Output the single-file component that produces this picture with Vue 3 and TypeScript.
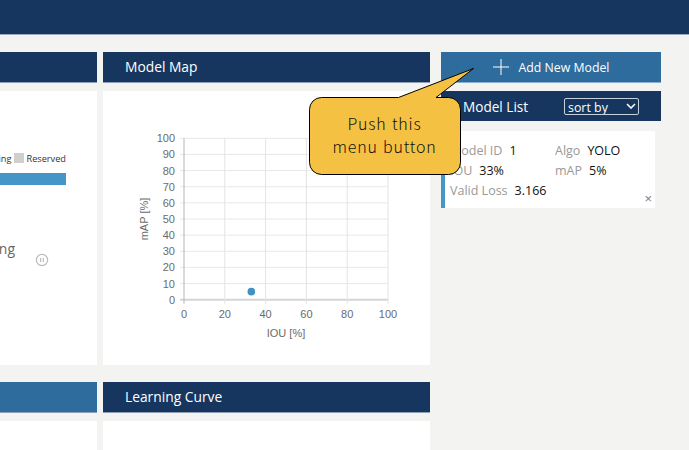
<template>
  <div class="page">
    <header class="topbar" />

    <main class="board">
      <div class="charts">
        <section class="panel panel--first">
          <h2 class="panel-head" />
          <div class="panel-body status">
            <div class="legend">
              <span class="legend-label">Training</span>
              <i class="swatch" />
              <span class="legend-label">Reserved</span>
            </div>
            <div class="usage-bar" />
            <div class="job-row">
              <span class="job-name">Training</span>
              <svg class="pause" viewBox="0 0 14 14" width="14" height="14">
                <circle cx="7" cy="7" r="5.6" fill="none" stroke="#bdbdbd" stroke-width="1.2" />
                <path d="M5.6 4.9v4.2M8.4 4.9v4.2" stroke="#bdbdbd" stroke-width="1.2" />
              </svg>
            </div>
          </div>
        </section>

        <section class="panel">
          <h2 class="panel-head">Model Map</h2>
          <div class="panel-body">
            <svg class="map" viewBox="0 0 327 274" width="327" height="274">
              <g v-for="t in ticks" :key="'h' + t">
                <line :x1="plot.left - 4" :x2="plot.right" :y1="yOf(t)" :y2="yOf(t)" :stroke="t === 0 ? '#d4d4d4' : '#e8e8e8'" :stroke-width="t === 0 ? 2 : 1" />
                <text class="tick" :x="plot.left - 9" :y="yOf(t) + 4" text-anchor="end">{{ t }}</text>
              </g>
              <g v-for="t in xTicks" :key="'v' + t">
                <line :x1="xOf(t)" :x2="xOf(t)" :y1="plot.top" :y2="plot.bottom + 4" :stroke="t === 0 ? '#b5b5b5' : '#e4e4e4'" />
                <text class="tick" :x="xOf(t)" :y="plot.bottom + 18" text-anchor="middle">{{ t }}</text>
              </g>
              <text class="tick" :x="183" :y="246" text-anchor="middle">IOU [%]</text>
              <text class="tick" text-anchor="middle" transform="translate(45 128) rotate(-90)">mAP [%]</text>
              <circle :cx="xOf(33)" :cy="yOf(5)" r="3.8" fill="#3f92c5" />
            </svg>
          </div>
        </section>

        <section class="panel panel--first panel--low">
          <h2 class="panel-head panel-head--light" />
          <div class="panel-body" />
        </section>

        <section class="panel panel--low">
          <h2 class="panel-head">Learning Curve</h2>
          <div class="panel-body" />
        </section>
      </div>

      <aside class="side">
        <button class="add-btn" type="button">
          <svg viewBox="0 0 16 16" width="16" height="16">
            <path d="M8 0v16M0 8h16" stroke="#fff" stroke-width="1" fill="none" />
          </svg>
          <span>Add New Model</span>
        </button>

        <div class="list-head">
          <span class="list-title">Model List</span>
          <label class="sort">
            <select>
              <option>sort by</option>
            </select>
            <svg viewBox="0 0 10 6" width="10" height="6">
              <path d="M1 1l4 4 4-4" stroke="#fff" stroke-width="1.6" fill="none" />
            </svg>
          </label>
        </div>

        <article v-for="m in models" :key="m.id" class="card">
          <div><span class="key">Model ID</span>{{ m.id }}</div>
          <div><span class="key">Algo</span>{{ m.algo }}</div>
          <div><span class="key">IOU</span>{{ m.iou }}%</div>
          <div><span class="key">mAP</span>{{ m.map }}%</div>
          <div class="wide"><span class="key">Valid Loss</span>{{ m.loss }}</div>
          <span class="close">×</span>
        </article>
      </aside>
    </main>

    <div class="callout">
      <svg viewBox="0 0 170 112" width="170" height="112">
        <path
          d="M12.5 29.5H89.5L164.5 0.5L127 29.5H139.5a12 12 0 0 1 12 12V94.5a12 12 0 0 1-12 12H12.5a12 12 0 0 1-12-12V41.5a12 12 0 0 1 12-12Z"
          fill="#f5c142"
          stroke="#000"
          stroke-width="1"
        />
      </svg>
      <p class="callout-text">Push this<br />menu button</p>
    </div>
  </div>
</template>

<script setup lang="ts">
  const plot = { left: 81, right: 285, top: 47.3, bottom: 208.7 }

  const ticks = [0, 10, 20, 30, 40, 50, 60, 70, 80, 90, 100]
  const xTicks = [0, 20, 40, 60, 80, 100]

  const models = [{ id: 1, algo: "YOLO", iou: 33, map: 5, loss: 3.166 }]

  function xOf(v: number) {
    return plot.left + ((plot.right - plot.left) * v) / 100
  }

  function yOf(v: number) {
    return plot.bottom - ((plot.bottom - plot.top) * v) / 100
  }
</script>

<style scoped>
  .page {
    position: relative;
    width: 689px;
    height: 450px;
    overflow: hidden;
    background: #f3f3f1;
    font-family: "Open Sans", "Liberation Sans", sans-serif;
  }

  .topbar {
    height: 35px;
    background: #16365f;
    border-bottom: 1px solid #9aa9bd;
    box-sizing: border-box;
  }

  .board {
    display: flex;
    padding-top: 17px;
  }

  .charts {
    display: grid;
    grid-template-columns: 97px 327px;
    grid-template-rows: 313px 1fr;
    column-gap: 6px;
    row-gap: 17px;
    width: 430px;
  }

  .panel {
    min-width: 0;
    overflow: hidden;
  }

  .panel-head {
    box-sizing: border-box;
    height: 31px;
    margin: 0 0 8px;
    padding-left: 22px;
    background: #16365f;
    border-bottom: 1px solid #8fa0b6;
    color: #fff;
    font-size: 13.8px;
    font-weight: 400;
    line-height: 30px;
  }

  .panel-head--light {
    background: #2e6c9e;
  }

  .panel-body {
    height: 274px;
    background: #fff;
  }

  .panel--low .panel-body {
    height: 30px;
  }

  .status {
    display: flex;
    flex-direction: column;
    align-items: flex-end;
    padding: 61px 31px 0 0;
    box-sizing: border-box;
    color: #333;
  }

  .legend {
    display: flex;
    align-items: center;
    height: 12px;
    white-space: nowrap;
  }

  .legend-label {
    font-size: 9.2px;
  }

  .swatch {
    width: 10px;
    height: 10px;
    margin: 0 3px 0 2px;
    background: #cfcfcf;
  }

  .usage-bar {
    flex: none;
    width: 220px;
    height: 12px;
    margin-top: 9px;
    background: #4596c8;
  }

  .job-row {
    display: flex;
    align-items: flex-start;
    margin-top: 54px;
    margin-right: 17px;
    white-space: nowrap;
    color: #666;
    font-size: 14px;
    line-height: 19px;
  }

  .pause {
    margin: 14px 0 0 20px;
  }

  .map {
    display: block;
  }

  .tick {
    fill: #6b6b6b;
    font-family: "Liberation Sans", Arial, sans-serif;
    font-size: 11px;
  }

  .side {
    display: flex;
    flex-direction: column;
    width: 220px;
    margin-left: 11px;
  }

  .add-btn {
    box-sizing: border-box;
    display: flex;
    align-items: center;
    justify-content: center;
    gap: 10px;
    height: 31px;
    padding: 0;
    border: 0;
    border-bottom: 1px solid #8fb0cc;
    background: #2e6c9e;
    color: #fff;
    font-family: inherit;
    font-size: 12.3px;
  }

  .list-head {
    box-sizing: border-box;
    display: flex;
    align-items: center;
    height: 30px;
    margin-top: 8px;
    padding-left: 22px;
    background: #16365f;
    color: #fff;
  }

  .list-title {
    width: 101px;
    font-size: 13.6px;
  }

  .sort {
    position: relative;
    display: block;
    width: 75px;
    height: 17px;
  }

  .sort select {
    appearance: none;
    box-sizing: border-box;
    display: block;
    width: 100%;
    height: 100%;
    padding: 2px 0 0 3px;
    border: 1px solid #c8d0dc;
    border-radius: 2px;
    background: transparent;
    color: #fff;
    font-family: inherit;
    font-size: 12.4px;
    line-height: 13px;
  }

  .sort svg {
    position: absolute;
    top: 5px;
    right: 3px;
    pointer-events: none;
  }

  .card {
    position: relative;
    box-sizing: border-box;
    display: grid;
    grid-template-columns: 105px 1fr;
    grid-auto-rows: 20.3px;
    align-items: center;
    width: 214px;
    height: 77px;
    margin-top: 10px;
    padding: 9px 0 0 5px;
    background: #fff;
    border-left: 4px solid #4596c8;
    color: #111;
    font-size: 12.5px;
  }

  .wide {
    grid-column: 1 / -1;
  }

  .key {
    margin-right: 7px;
    color: #999;
  }

  .close {
    position: absolute;
    right: 3px;
    bottom: 2px;
    color: #808080;
    font-family: "Liberation Sans", sans-serif;
    font-size: 13px;
    line-height: 14px;
  }

  .callout {
    position: absolute;
    left: 309px;
    top: 68px;
    width: 170px;
    height: 112px;
  }

  .callout svg {
    display: block;
  }

  .callout-text {
    position: absolute;
    left: 0;
    top: 44px;
    width: 151px;
    margin: 0;
    color: #111;
    font-family: "Noto Sans CJK JP", "DejaVu Sans", sans-serif;
    font-size: 16px;
    font-weight: 300;
    letter-spacing: 0.8px;
    word-spacing: 1px;
    line-height: 23px;
    text-align: center;
  }
</style>

<style>
  html,
  body {
    margin: 0;
    overflow: hidden;
    background: #f3f3f1;
  }
</style>
